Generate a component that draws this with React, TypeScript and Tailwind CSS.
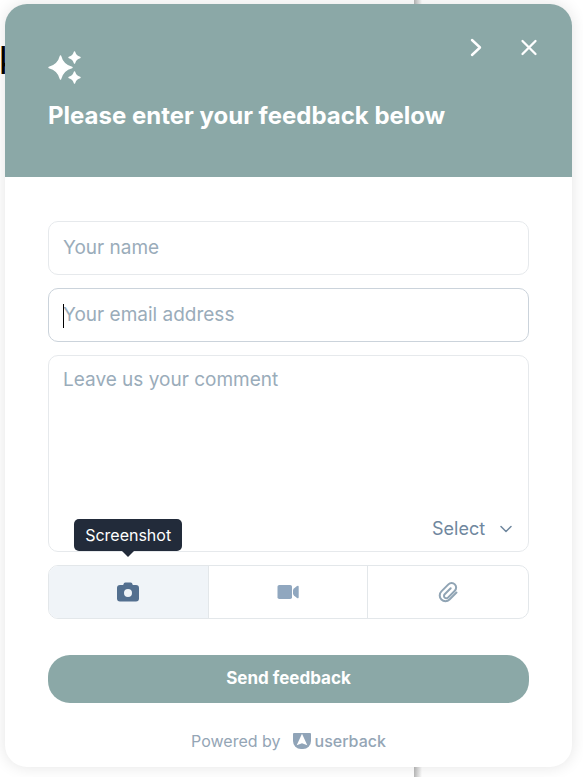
import React from "react"

function Sparkles() {
  return (
    <svg className="h-[34px] w-[34px]" viewBox="0 0 34 34" fill="white" stroke="white" strokeWidth="1.4" strokeLinejoin="round" aria-hidden="true">
      <path d="M12.5 6 Q14.8 15.2 24 17.5 Q14.8 19.8 12.5 29 Q10.2 19.8 1 17.5 Q10.2 15.2 12.5 6Z" />
      <path d="M26.5 2 Q27.6 6.4 32 7.5 Q27.6 8.6 26.5 13 Q25.4 8.6 21 7.5 Q25.4 6.4 26.5 2Z" />
      <path d="M26.5 22 Q27.6 26.4 32 27.5 Q27.6 28.6 26.5 33 Q25.4 28.6 21 27.5 Q25.4 26.4 26.5 22Z" />
    </svg>
  )
}

function Camera() {
  return (
    <svg className="h-5 w-6" viewBox="0 0 24 20" fill="#536f8f" aria-hidden="true">
      <path fillRule="evenodd" d="M9.500 .5h5q1.300 0 1.700 1l.6 1.500h3.200A3 3 0 0 1 23 6v10.500a3 3 0 0 1-3 3H4a3 3 0 0 1-3-3V6a3 3 0 0 1 3-3h3.200l.6-1.500q.4-1 1.700-1ZM12 7a4 4 0 1 0 0 8a4 4 0 1 0 0-8Z" />
    </svg>
  )
}

function Video() {
  return (
    <svg className="h-5 w-6" viewBox="0 0 24 20" fill="#90a7bf" aria-hidden="true">
      <rect x="1.500" y="3" width="14.500" height="14" rx="1.800" />
      <path d="M17 8.500q0-1.200.9-2L21 4q1.700-1 1.700.8v10.400q0 1.800-1.700.8l-3.100-2.500q-.9-.8-.9-2Z" />
    </svg>
  )
}

function Clip() {
  return (
    <svg className="h-6 w-6" viewBox="0 0 24 24" fill="none" stroke="#90a4b4" strokeWidth="2" strokeLinecap="round" strokeLinejoin="round" aria-hidden="true">
      <path d="M20.500 12.500l-7 7a5.700 5.700 0 0 1-8.100 0a5.700 5.700 0 0 1 0-8.100l7-7a4.500 4.500 0 0 1 6.400 0a4.500 4.500 0 0 1 0 6.400l-6.800 6.800a2.300 2.300 0 0 1-3.300 0a2.300 2.300 0 0 1 0-3.300l6-6" />
    </svg>
  )
}

function UserbackMark() {
  return (
    <svg className="h-4 w-[18px]" viewBox="0 0 18 16" aria-hidden="true">
      <path d="M1 0h16Q18 0 18 1V8a8 8 0 0 1-8 8H8a8 8 0 0 1-8-8V1Q0 0 1 0Z" fill="#90a4b8" />
      <path d="M9 .8L14.300 12.300L9 10.200L3.700 12.300Z" fill="white" />
    </svg>
  )
}

const field =
  "block h-[54px] w-full rounded-[10px] border bg-white px-3.5 pb-0.5 text-[19px] text-slate-700 outline-none placeholder:text-[#9aacba]"
const tool = "flex items-center justify-center"

export default function App() {
  return (
    <div className="relative min-h-screen overflow-hidden bg-white pt-1 pr-[11px] pb-2.5 pl-[5px] font-['Inter',sans-serif]">
      <div className="absolute inset-y-0 left-[414px] w-2 bg-linear-to-r from-[#b8b8b8] to-white" />
      <span className="absolute top-[39px] -left-px font-['Liberation_Sans',sans-serif] text-[38px] leading-[44px] text-black" aria-hidden="true">k</span>

      <main className="relative overflow-hidden rounded-[22px] bg-white shadow-[0_0_16px_rgba(0,0,0,0.11)]">
        <header className="relative h-[173px] bg-[#8ba8a7] px-[43px] pt-[46px] text-white">
          <Sparkles />
          <h1 className="mt-3.5 text-2xl leading-9 font-bold">Please enter your feedback below</h1>
          <div className="absolute top-[31px] right-[31px] flex gap-[29px]">
            <button type="button" aria-label="Collapse" className="flex h-6 w-6 items-center justify-center">
              <svg className="h-5 w-5" viewBox="0 0 20 20" fill="none" stroke="white" strokeWidth="2.4" strokeLinecap="round" strokeLinejoin="round">
                <path d="M6 3l8 7.500l-8 7.500" />
              </svg>
            </button>
            <button type="button" aria-label="Close" className="flex h-6 w-6 items-center justify-center">
              <svg className="h-5 w-5" viewBox="0 0 20 20" fill="none" stroke="white" strokeWidth="2.300" strokeLinecap="round">
                <path d="M3.500 4l13 13M16.500 4l-13 13" />
              </svg>
            </button>
          </div>
        </header>

        <form className="px-[43px] pt-11" onSubmit={(e) => e.preventDefault()}>
          <div className="flex flex-col gap-[13px]">
            <input type="text" aria-label="Your name" placeholder="Your name" className={`${field} border-[#e6e9ec]`} />
            <div className="relative">
              <input type="email" aria-label="Your email address" placeholder="Your email address" className={`${field} border-[#cbd3db]`} />
              <span className="absolute top-4 left-[15px] h-6 w-px bg-black" />
            </div>
            <div className="flex h-[197px] flex-col rounded-[10px] border border-[#e6e9ec]">
              <textarea
                aria-label="Leave us your comment"
                placeholder="Leave us your comment"
                className="block w-full flex-1 resize-none px-3.5 pt-2.5 text-[19px] leading-7 text-slate-700 outline-none placeholder:text-[#9aacba]"
              />
              <div className="flex h-11 items-center justify-end gap-3 pr-3.5">
                <select aria-label="Category" className="appearance-none bg-transparent text-lg text-[#6f879e] outline-none">
                  <option>Select</option>
                </select>
                <svg className="h-4 w-4" viewBox="0 0 16 16" fill="none" stroke="#6f879e" strokeWidth="1.500" strokeLinecap="round" strokeLinejoin="round" aria-hidden="true">
                  <path d="M3 5.500l5 5l5-5" />
                </svg>
              </div>
            </div>
            <div className="relative">
              <div className="grid h-[54px] grid-cols-3 divide-x divide-[#e3e7ea] overflow-hidden rounded-[10px] border border-[#e3e7ea]">
                <button type="button" aria-label="Screenshot" className={`${tool} bg-[#f0f4f8]`}>
                  <Camera />
                </button>
                <button type="button" aria-label="Video" className={tool}>
                  <Video />
                </button>
                <button type="button" aria-label="Attach file" className={tool}>
                  <Clip />
                </button>
              </div>
              <div role="tooltip" className="absolute bottom-full left-1/6 mb-3.5 -translate-x-1/2 rounded-[5px] bg-[#222b3a] px-[11px] py-1 text-base leading-6 text-white">
                Screenshot
                <svg className="absolute top-full left-1/2 h-1.5 w-3 -translate-x-1/2" viewBox="0 0 12 6" fill="#222b3a" aria-hidden="true">
                  <path d="M0 0h12L6 6Z" />
                </svg>
              </div>
            </div>
          </div>
          <button type="submit" className="mt-9 block h-12 w-full rounded-[22px] bg-[#8ba8a7] text-[17px] font-bold text-white">
            Send feedback
          </button>
        </form>

        <footer className="flex items-center justify-center gap-3 pt-[26px] pb-3.5 text-base leading-6 text-[#94a5b5]">
          <span>Powered by</span>
          <a href="#" className="flex items-center gap-1 font-medium">
            <UserbackMark />
            userback
          </a>
        </footer>
      </main>
    </div>
  )
}
